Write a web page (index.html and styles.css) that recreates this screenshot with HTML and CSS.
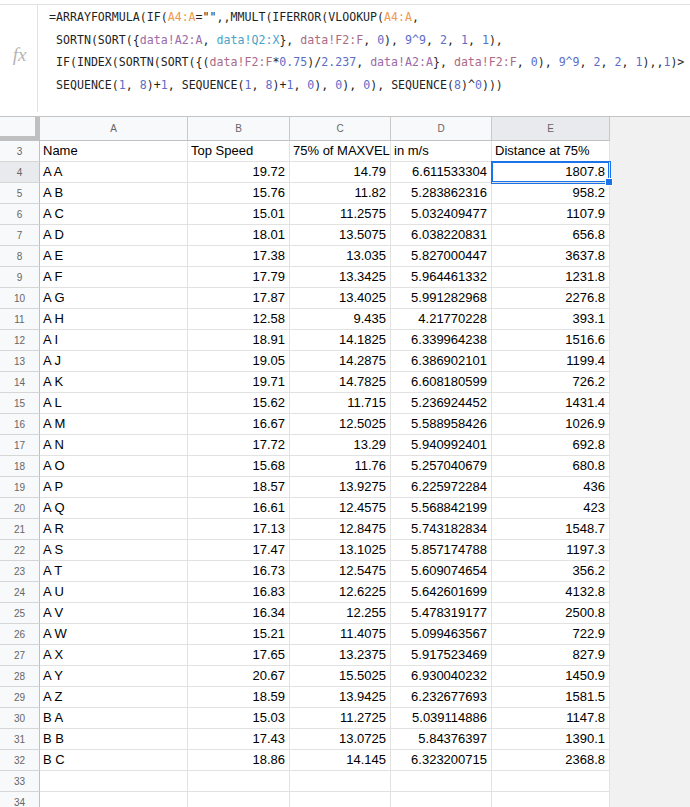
FILE: index.html
```html
<!DOCTYPE html>
<html>
<head>
<meta charset="utf-8">
<link rel="stylesheet" href="styles.css">
</head>
<body>
<div class="app">
  <div class="formula-bar">
    <div class="fx">fx</div>
    <div class="formula">
<div class="fl">=ARRAYFORMULA(IF(<span class="o">A4:A</span>="",,MMULT(IFERROR(VLOOKUP(<span class="o">A4:A</span>,</div>
<div class="fl"> SORTN(SORT({<span class="p">data!A2:A</span>, <span class="t">data!Q2:X</span>}, <span class="r">data!F2:F</span>, <span class="n">0</span>), <span class="n">9^9</span>, <span class="n">2</span>, <span class="n">1</span>, <span class="n">1</span>),</div>
<div class="fl"> IF(INDEX(SORTN(SORT({(<span class="r">data!F2:F</span>*<span class="n">0.75</span>)/<span class="n">2.237</span>, <span class="p">data!A2:A</span>}, <span class="r">data!F2:F</span>, <span class="n">0</span>), <span class="n">9^9</span>, <span class="n">2</span>, <span class="n">2</span>, <span class="n">1</span>),,<span class="n">1</span>)&gt;</div>
<div class="fl"> SEQUENCE(<span class="n">1</span>, <span class="n">8</span>)+<span class="n">1</span>, SEQUENCE(<span class="n">1</span>, <span class="n">8</span>)+<span class="n">1</span>, <span class="n">0</span>), <span class="n">0</span>), <span class="n">0</span>), SEQUENCE(<span class="n">8</span>)^<span class="n">0</span>)))</div>
    </div>
  </div>
  <div class="sheet">
    <div class="grid">
      <div class="corner"></div>
      <div class="ch">A</div><div class="ch">B</div><div class="ch">C</div><div class="ch">D</div><div class="ch sel">E</div>

      <div class="rh">3</div><div class="c">Name</div><div class="c">Top Speed</div><div class="c">75% of MAXVEL</div><div class="c">in m/s</div><div class="c">Distance at 75%</div>
      <div class="rh sel">4</div><div class="c">A A</div><div class="c num">19.72</div><div class="c num">14.79</div><div class="c num">6.611533304</div><div class="c num active">1807.8<span class="handle"></span></div>
      <div class="rh">5</div><div class="c">A B</div><div class="c num">15.76</div><div class="c num">11.82</div><div class="c num">5.283862316</div><div class="c num">958.2</div>
      <div class="rh">6</div><div class="c">A C</div><div class="c num">15.01</div><div class="c num">11.2575</div><div class="c num">5.032409477</div><div class="c num">1107.9</div>
      <div class="rh">7</div><div class="c">A D</div><div class="c num">18.01</div><div class="c num">13.5075</div><div class="c num">6.038220831</div><div class="c num">656.8</div>
      <div class="rh">8</div><div class="c">A E</div><div class="c num">17.38</div><div class="c num">13.035</div><div class="c num">5.827000447</div><div class="c num">3637.8</div>
      <div class="rh">9</div><div class="c">A F</div><div class="c num">17.79</div><div class="c num">13.3425</div><div class="c num">5.964461332</div><div class="c num">1231.8</div>
      <div class="rh">10</div><div class="c">A G</div><div class="c num">17.87</div><div class="c num">13.4025</div><div class="c num">5.991282968</div><div class="c num">2276.8</div>
      <div class="rh">11</div><div class="c">A H</div><div class="c num">12.58</div><div class="c num">9.435</div><div class="c num">4.21770228</div><div class="c num">393.1</div>
      <div class="rh">12</div><div class="c">A I</div><div class="c num">18.91</div><div class="c num">14.1825</div><div class="c num">6.339964238</div><div class="c num">1516.6</div>
      <div class="rh">13</div><div class="c">A J</div><div class="c num">19.05</div><div class="c num">14.2875</div><div class="c num">6.386902101</div><div class="c num">1199.4</div>
      <div class="rh">14</div><div class="c">A K</div><div class="c num">19.71</div><div class="c num">14.7825</div><div class="c num">6.608180599</div><div class="c num">726.2</div>
      <div class="rh">15</div><div class="c">A L</div><div class="c num">15.62</div><div class="c num">11.715</div><div class="c num">5.236924452</div><div class="c num">1431.4</div>
      <div class="rh">16</div><div class="c">A M</div><div class="c num">16.67</div><div class="c num">12.5025</div><div class="c num">5.588958426</div><div class="c num">1026.9</div>
      <div class="rh">17</div><div class="c">A N</div><div class="c num">17.72</div><div class="c num">13.29</div><div class="c num">5.940992401</div><div class="c num">692.8</div>
      <div class="rh">18</div><div class="c">A O</div><div class="c num">15.68</div><div class="c num">11.76</div><div class="c num">5.257040679</div><div class="c num">680.8</div>
      <div class="rh">19</div><div class="c">A P</div><div class="c num">18.57</div><div class="c num">13.9275</div><div class="c num">6.225972284</div><div class="c num">436</div>
      <div class="rh">20</div><div class="c">A Q</div><div class="c num">16.61</div><div class="c num">12.4575</div><div class="c num">5.568842199</div><div class="c num">423</div>
      <div class="rh">21</div><div class="c">A R</div><div class="c num">17.13</div><div class="c num">12.8475</div><div class="c num">5.743182834</div><div class="c num">1548.7</div>
      <div class="rh">22</div><div class="c">A S</div><div class="c num">17.47</div><div class="c num">13.1025</div><div class="c num">5.857174788</div><div class="c num">1197.3</div>
      <div class="rh">23</div><div class="c">A T</div><div class="c num">16.73</div><div class="c num">12.5475</div><div class="c num">5.609074654</div><div class="c num">356.2</div>
      <div class="rh">24</div><div class="c">A U</div><div class="c num">16.83</div><div class="c num">12.6225</div><div class="c num">5.642601699</div><div class="c num">4132.8</div>
      <div class="rh">25</div><div class="c">A V</div><div class="c num">16.34</div><div class="c num">12.255</div><div class="c num">5.478319177</div><div class="c num">2500.8</div>
      <div class="rh">26</div><div class="c">A W</div><div class="c num">15.21</div><div class="c num">11.4075</div><div class="c num">5.099463567</div><div class="c num">722.9</div>
      <div class="rh">27</div><div class="c">A X</div><div class="c num">17.65</div><div class="c num">13.2375</div><div class="c num">5.917523469</div><div class="c num">827.9</div>
      <div class="rh">28</div><div class="c">A Y</div><div class="c num">20.67</div><div class="c num">15.5025</div><div class="c num">6.930040232</div><div class="c num">1450.9</div>
      <div class="rh">29</div><div class="c">A Z</div><div class="c num">18.59</div><div class="c num">13.9425</div><div class="c num">6.232677693</div><div class="c num">1581.5</div>
      <div class="rh">30</div><div class="c">B A</div><div class="c num">15.03</div><div class="c num">11.2725</div><div class="c num">5.039114886</div><div class="c num">1147.8</div>
      <div class="rh">31</div><div class="c">B B</div><div class="c num">17.43</div><div class="c num">13.0725</div><div class="c num">5.84376397</div><div class="c num">1390.1</div>
      <div class="rh">32</div><div class="c">B C</div><div class="c num">18.86</div><div class="c num">14.145</div><div class="c num">6.323200715</div><div class="c num">2368.8</div>
      <div class="rh">33</div><div class="c"></div><div class="c"></div><div class="c"></div><div class="c"></div><div class="c"></div>
      <div class="rh">34</div><div class="c"></div><div class="c"></div><div class="c"></div><div class="c"></div><div class="c"></div>
    </div>
    <div class="filler"></div>
  </div>
</div>
</body>
</html>
```
FILE: styles.css
```css
html, body {
  margin: 0;
  padding: 0;
  background: #ffffff;
}
.app {
  width: 690px;
  height: 807px;
  overflow: hidden;
  display: flex;
  flex-direction: column;
}
.formula-bar {
  margin-top: 4px;
  border-top: 1px solid #e1e1e1;
  height: 111px;
  display: flex;
  flex: none;
}
.fx {
  width: 38px;
  height: 107px;
  border-right: 1px solid #e1e1e1;
  box-sizing: border-box;
  display: flex;
  align-items: center;
  justify-content: center;
  padding-left: 2px;
  padding-bottom: 8px;
  font-family: "Liberation Serif", serif;
  font-style: italic;
  font-size: 19px;
  color: #b5b5b5;
  flex: none;
}
.formula {
  padding-left: 11px;
  padding-top: 1px;
  font-family: "DejaVu Sans Mono", monospace;
  font-size: 11.6px;
  line-height: 22.5px;
  color: #1f1f1f;
}
.fl {
  white-space: pre;
}
.o { color: #ee9a4d; }
.p { color: #9c6aa8; }
.t { color: #47a4c9; }
.r { color: #ab6a86; }
.n { color: #5b6dc8; }

.sheet {
  flex: 1;
  display: flex;
  background: #f1f1f1;
  border-top: 1px solid #c4c4c4;
}
.grid {
  display: grid;
  grid-template-columns: 40px 148px 102px 101px 101px 118px;
  grid-auto-rows: 21px;
  grid-template-rows: 24px;
  background: #ffffff;
  align-content: start;
  font-family: "Liberation Sans", Arial, sans-serif;
}
.corner {
  background: #f8f9fa;
  border-right: 5px solid #c0c0c0;
  border-bottom: 5px solid #c0c0c0;
  box-sizing: border-box;
}
.ch {
  background: #f8f9fa;
  border-right: 1px solid #c8c8c8;
  border-bottom: 1px solid #c0c0c0;
  box-sizing: border-box;
  display: flex;
  align-items: center;
  justify-content: center;
  font-size: 10px;
  color: #666;
}
.ch.sel, .rh.sel {
  background: #e8eaed;
}
.rh {
  background: #f8f9fa;
  border-right: 1px solid #c0c0c0;
  border-bottom: 1px solid #d6d6d6;
  box-sizing: border-box;
  display: flex;
  align-items: center;
  justify-content: center;
  font-size: 10px;
  color: #666;
}
.c {
  border-right: 1px solid #e2e2e2;
  border-bottom: 1px solid #e2e2e2;
  box-sizing: border-box;
  font-size: 13px;
  line-height: 20px;
  padding: 0 3px;
  color: #000;
  white-space: nowrap;
  overflow: hidden;
}
.num {
  text-align: right;
  padding-right: 4px;
}
.active {
  position: relative;
  overflow: visible;
  box-shadow: 0 0 0 1px #1a73e8, inset 0 0 0 1px #1a73e8;
}
.handle {
  position: absolute;
  right: -4px;
  bottom: -4px;
  width: 6px;
  height: 6px;
  background: #1a73e8;
  border: 1px solid #fff;
}
.filler {
  flex: 1;
  background: #f1f1f1;
}
```
